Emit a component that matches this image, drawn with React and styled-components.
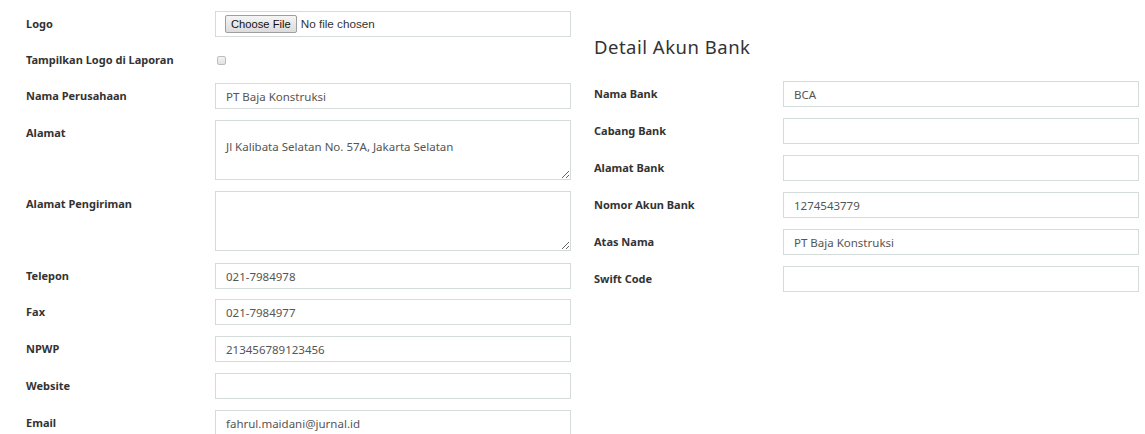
import React from "react";
import styled, { createGlobalStyle } from "styled-components";

const Global = createGlobalStyle`
  html, body { margin: 0; padding: 0; background: #fff; }
  body { font-family: "Noto Sans", sans-serif; color: #333; }
  * { box-sizing: border-box; }
`;

const Page = styled.div`
  display: flex;
  gap: 23px;
  padding: 11px 6px 0 26px;
  width: 1145px;
  height: 434px;
  overflow: hidden;
`;

const Column = styled.div`
  width: 545px;
  display: flex;
  flex-direction: column;
  gap: 11px;
  margin-top: ${(p) => p.$top || 0}px;
`;

const Heading = styled.h3`
  margin: 35px 0 11px;
  font-size: 18.5px;
  line-height: 24px;
  font-weight: 400;
  color: #333;
  letter-spacing: 0.5px;
`;

const Row = styled.div`
  display: flex;
  align-items: flex-start;
  flex: none;
  height: ${(p) => p.$h ?? 26}px;
`;

const Label = styled.label`
  width: 189px;
  flex: none;
  font-size: 11px;
  font-weight: 700;
  line-height: ${(p) => p.$lh || 26}px;
  color: #333;
`;

const Input = styled.input`
  width: 356px;
  height: 26px;
  flex: none;
  border: 1px solid #d3dbdb;
  border-radius: 0;
  padding: 0 10px;
  font-family: "Noto Sans", sans-serif;
  font-size: 11.5px;
  color: #555;
  background: #fff;
  outline: none;
`;

const TextArea = styled.textarea`
  display: block;
  width: 356px;
  height: 60px;
  margin: 0;
  border: 1px solid #d3dbdb;
  padding: 17px 10px 0;
  font-family: "Noto Sans", sans-serif;
  font-size: 11.5px;
  line-height: 18px;
  color: #555;
  resize: vertical;
  outline: none;
`;

const FileBox = styled.div`
  width: 356px;
  height: 26px;
  border: 1px solid #d3dbdb;
  padding: 0 9px;
  display: flex;
  align-items: center;
  font-family: "Liberation Sans", Arial, sans-serif;
  font-size: 12px;
  color: #333;
  input {
    font-family: inherit;
    font-size: 11.7px;
    color: #333;
  }
  input::file-selector-button {
    font-family: "Liberation Sans", Arial, sans-serif;
    font-size: 11.2px;
    height: 18px;
    padding: 0 5px;
    margin-right: 4px;
    border: 1px solid #9e9e9e;
    border-radius: 2px;
    background: linear-gradient(#f5f5f5, #dcdcdc);
    color: #111;
  }
`;

const Check = styled.input`
  appearance: none;
  width: 9px;
  height: 9px;
  margin: 8px 0 0 2px;
  border: 1px solid #bdbdbd;
  border-radius: 2px;
  background: linear-gradient(#f3f3f3, #e2e2e2);
`;

const contact = [
  { label: "Telepon", value: "021-7984978", h: 25 },
  { label: "Fax", value: "021-7984977" },
  { label: "NPWP", value: "213456789123456" },
  { label: "Website", value: "" },
  { label: "Email", value: "fahrul.maidani@jurnal.id" },
];
const bank = [
  { label: "Nama Bank", value: "BCA" },
  { label: "Cabang Bank", value: "" },
  { label: "Alamat Bank", value: "" },
  { label: "Nomor Akun Bank", value: "1274543779" },
  { label: "Atas Nama", value: "PT Baja Konstruksi" },
  { label: "Swift Code", value: "" },
];

const Field = ({ label, value, h }) => (
  <Row $h={h}>
    <Label>{label}</Label>
    <Input type="text" defaultValue={value} />
  </Row>
);

export default function App() {
  return (
    <>
      <Global />
      <Page>
        <Column>
          <Row>
            <Label>Logo</Label>
            <FileBox>
              <input type="file" />
            </FileBox>
          </Row>
          <Row $h={24}>
            <Label $lh={24}>Tampilkan Logo di Laporan</Label>
            <Check type="checkbox" />
          </Row>
          <Field label="Nama Perusahaan" value="PT Baja Konstruksi" />
          <Row $h={60}>
            <Label>Alamat</Label>
            <TextArea defaultValue="Jl Kalibata Selatan No. 57A, Jakarta Selatan" />
          </Row>
          <Row $h={61}>
            <Label>Alamat Pengiriman</Label>
            <TextArea defaultValue="" />
          </Row>
          {contact.map((f) => (
            <Field key={f.label} {...f} />
          ))}
        </Column>
        <Column $top={-11}>
          <Heading>Detail Akun Bank</Heading>
          {bank.map((f) => (
            <Field key={f.label} {...f} />
          ))}
        </Column>
      </Page>
    </>
  );
}
